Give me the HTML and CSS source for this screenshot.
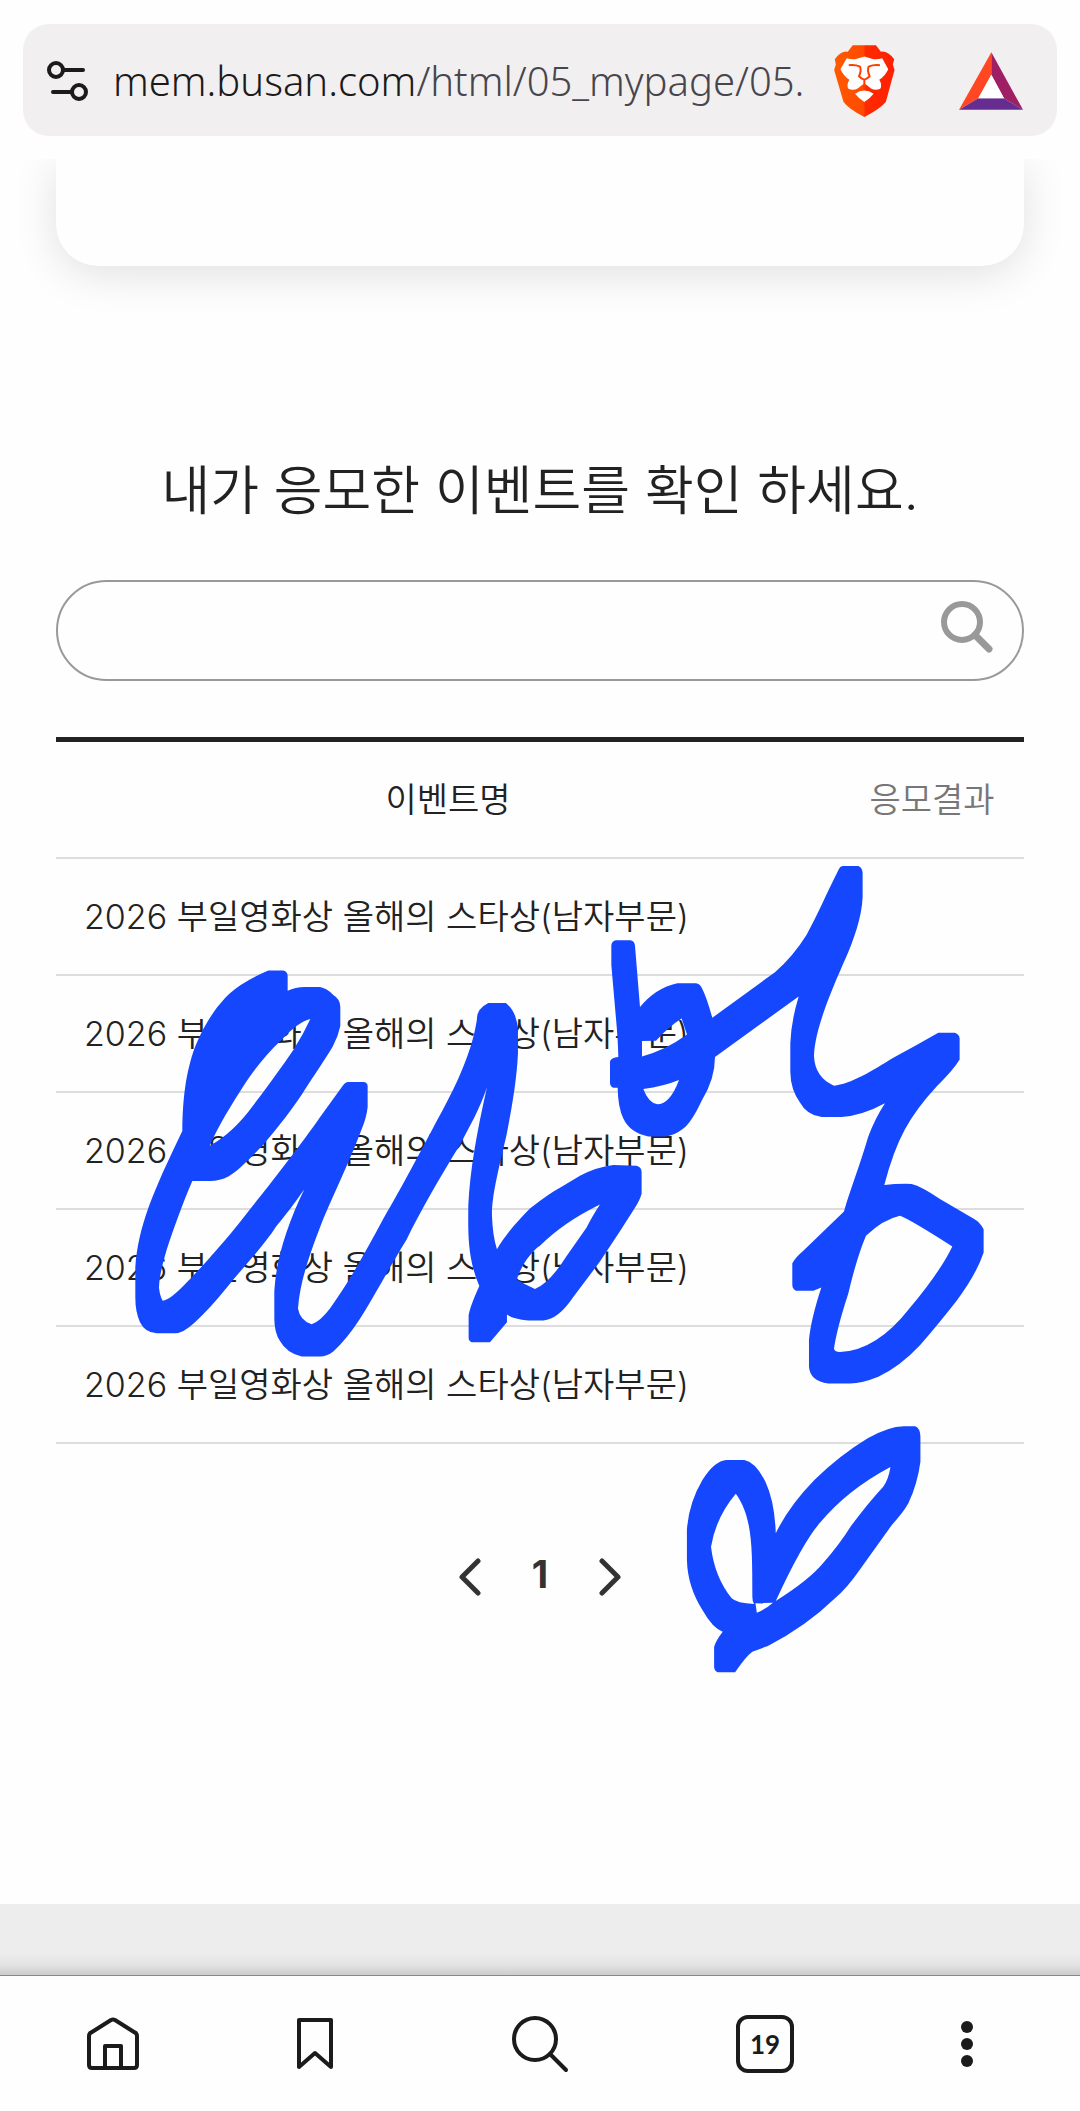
FILE: index.html
```html
<!DOCTYPE html>
<html lang="ko">
<head>
<meta charset="utf-8">
<meta name="viewport" content="width=device-width, initial-scale=1">
<title>이벤트 응모 내역</title>
<link rel="stylesheet" href="styles.css">
</head>
<body>
<header class="topbar">
  <div class="address">
    <button class="icon-button" type="button" aria-label="사이트 설정">
      <svg width="44" height="44" viewBox="0 0 44 44" fill="none" stroke="#1b1b1b" stroke-width="4">
        <circle cx="11" cy="11" r="7"/><path d="M18 11h20" stroke-linecap="round"/>
        <circle cx="34" cy="33" r="7"/><path d="M27 33H8" stroke-linecap="round"/>
      </svg>
    </button>
    <button class="url" type="button">mem.busan.com<span class="url-path">/html/05_mypage/05.</span></button>
    <button class="icon-button" type="button" aria-label="Brave Shields">
      <svg width="61" height="72" viewBox="102 75 183 217">
        <defs><linearGradient id="lion"><stop offset="0" stop-color="#ff5a00"/><stop offset=".48" stop-color="#ff4a00"/><stop offset=".52" stop-color="#ff2a00"/><stop offset="1" stop-color="#ff2000"/></linearGradient></defs>
        <path fill="url(#lion)" d="M158 76H228L243 95Q264 92 283 118L279 134L284 150L258 246Q243 266 193 292Q143 266 130 246L102 150L107 134L104 118Q122 92 143 95Z"/>
        <path fill="#fff" d="M140 115Q155 119 168 117L193 110L218 117Q232 119 247 115L265 148Q256 168 238 180Q248 195 241 207Q226 214 212 205L197 193H189L174 205Q160 214 145 207Q138 195 148 180Q130 168 121 148Z"/>
        <path fill="#fff" d="M165 222Q193 202 221 222Q210 236 193 247Q176 236 165 222Z"/>
        <path fill="none" stroke="#ff3d00" stroke-width="6" stroke-linejoin="round" d="M146 136Q166 134 180 140Q185 151 177 169Q184 176 193 180Q202 176 209 169Q201 151 206 140Q220 134 240 136M193 178V204"/>
      </svg>
    </button>
    <button class="icon-button icon-button-wide" type="button" aria-label="Brave Rewards">
      <svg width="64" height="58" viewBox="478 97 192 173">
        <path fill="#ff4724" d="M575 97L478 270L536 235L575 165Z"/>
        <path fill="#9e1f63" d="M575 97L670 270L613 235L575 165Z"/>
        <path fill="#662d91" d="M478 270H670L613 235H536Z"/>
        <path fill="#fff" d="M575 165L613 235H536Z"/>
      </svg>
    </button>
  </div>
</header>

<main class="page">
  <div class="card"></div>
  <h1 class="title">내가 응모한 이벤트를 확인 하세요.</h1>
  <form class="search">
    <input class="search-input" type="search" aria-label="이벤트 검색">
    <button class="icon-button" type="submit" aria-label="검색">
      <svg width="54" height="54" viewBox="0 0 54 54" fill="none" stroke="#999" stroke-width="6">
        <circle cx="22" cy="22" r="18"/><path d="M35 35L49 49" stroke-width="7" stroke-linecap="round"/>
      </svg>
    </button>
  </form>

  <table class="events">
    <thead><tr><th>이벤트명</th><th class="result">응모결과</th></tr></thead>
    <tbody>
      <tr><td>2026 부일영화상 올해의 스타상(남자부문)</td><td></td></tr>
      <tr><td>2026 부일영화상 올해의 스타상(남자부문)</td><td></td></tr>
      <tr><td>2026 부일영화상 올해의 스타상(남자부문)</td><td></td></tr>
      <tr><td>2026 부일영화상 올해의 스타상(남자부문)</td><td></td></tr>
      <tr><td>2026 부일영화상 올해의 스타상(남자부문)</td><td></td></tr>
    </tbody>
  </table>

  <nav class="pagination" aria-label="페이지">
    <button class="page-button" type="button" aria-label="이전"><svg width="24" height="38" viewBox="0 0 24 38"><path d="M20 3L4 19L20 35"/></svg></button>
    <a class="page-button page-number" href="#" aria-current="page">1</a>
    <button class="page-button" type="button" aria-label="다음"><svg width="24" height="38" viewBox="0 0 24 38"><path d="M4 3L20 19L4 35"/></svg></button>
  </nav>

  <svg class="ink" viewBox="0 159 1080 1745" aria-hidden="true">
    <g transform="translate(120 840) scale(.3333 .3444)">
      <path d="M445 379L490 379Q503 382 503 395L503 438Q525 427 555 427L600 427Q620 430 640 450Q661 462 661 485L661 540Q655 570 638 600C600 660 570 700 545 740C500 805 460 850 430 885C390 925 350 965 325 977Q300 990 270 990L217 990C190 1050 160 1130 140 1190Q118 1260 117 1300Q120 1325 128 1338Q150 1337 205 1280C250 1235 330 1150 400 1060C450 1000 550 875 600 805L665 718Q675 703 685 703L732 703Q743 705 743 715L743 775Q740 805 725 840C690 930 650 1010 610 1100C570 1200 540 1280 534 1360Q540 1395 575 1406Q600 1398 630 1360C690 1280 740 1190 790 1100C860 985 920 870 965 790C1010 710 1058 610 1071 520Q1070 490 1105 473L1158 473Q1195 505 1194 560L1194 620C1190 700 1175 780 1160 855C1140 940 1115 1030 1116 1090Q1118 1150 1131 1188C1160 1140 1200 1100 1230 1070Q1290 1025 1320 1010L1380 975Q1430 950 1480 944L1550 946Q1565 950 1565 965L1565 1027Q1560 1045 1545 1068L1500 1136L1440 1224L1360 1327Q1315 1392 1270 1395L1225 1395Q1180 1392 1161 1378L1161 1400Q1135 1430 1110 1458L1055 1458Q1046 1455 1046 1445L1046 1380Q1050 1355 1078 1295C1040 1210 1045 1130 1045 1060C1050 960 1070 850 1101 718C1080 780 1050 830 1020 885C960 980 900 1080 860 1160C800 1255 760 1330 720 1390Q680 1450 640 1485Q620 1500 600 1500L545 1500Q500 1490 480 1455Q463 1430 463 1390L463 1310C468 1220 500 1120 553 1014C520 1060 500 1085 470 1120C430 1180 370 1240 320 1300Q270 1360 225 1400Q190 1432 165 1432L110 1432Q75 1430 60 1400Q46 1370 46 1330L46 1240C55 1120 100 1020 187 845C188 740 200 680 215 630C240 550 290 480 330 445Q370 410 445 379Z M269 888C295 830 340 760 370 715C400 670 440 620 485 580Q535 528 571 520Q550 565 520 610C485 660 440 720 400 770Q340 850 269 888Z M1190 1277C1205 1230 1240 1190 1260 1178Q1330 1110 1440 1058Q1415 1095 1400 1125L1340 1208Q1290 1285 1245 1304Q1215 1290 1190 1277Z"/>
    </g>
    <g transform="translate(540 840) scale(.3333 .3571)">
      <path d="M228 281L272 281Q284 284 285 296L300 468Q345 415 412 401L468 401Q480 403 486 415Q500 440 517 498L705 370Q760 325 800 265C830 215 860 150 895 85Q900 73 910 73L955 73Q967 78 968 92L968 160C965 220 940 280 920 325C870 430 825 530 822 605Q825 665 882 688C930 685 1000 645 1060 610Q1130 575 1195 540L1245 540Q1258 545 1259 555L1259 615Q1240 645 1190 690Q1130 750 1095 810Q1060 870 1033 966Q1070 962 1115 963Q1145 970 1200 1005L1300 1060Q1320 1070 1331 1090L1331 1155Q1310 1215 1250 1290Q1200 1350 1140 1415Q1080 1475 1015 1503Q965 1522 930 1522L865 1522Q810 1515 807 1475L807 1400Q812 1345 844 1253L820 1262L768 1262Q757 1258 757 1245L757 1185Q765 1170 790 1150L912 1040C930 980 960 910 985 830Q1005 780 1035 737Q970 770 905 776L845 776Q800 770 780 735Q752 700 751 650L751 570Q753 510 776 438L525 608Q525 670 485 730Q455 790 430 808Q400 830 375 830L325 830Q270 820 250 780Q234 750 233 694L220 694Q210 690 210 680L210 620Q213 610 235 608Q234 560 228 500L214 350L214 295Q216 283 228 281Z M306 563L348 562Q390 520 425 500L441 545Q375 590 306 606Z M310 697Q370 690 417 672Q390 740 352 740Q325 735 310 697Z M978 1108Q1030 1062 1080 1052Q1110 1062 1237 1138Q1200 1210 1110 1310Q1010 1430 900 1434Q885 1434 882 1425Q890 1370 925 1270Q950 1170 978 1108Z"/>
    </g>
    <g transform="translate(420 1400) scale(.3444 .3333)">
      <path d="M890 180L942 180Q975 187 1003 245Q1030 305 1033 400Q1070 320 1145 240Q1220 165 1300 115Q1360 80 1405 79L1438 79Q1452 84 1453 110L1453 185Q1445 250 1418 310Q1405 335 1370 375L1280 505Q1240 565 1205 595Q1120 680 1010 738L965 755Q945 770 915 817L865 817Q854 812 854 800L854 740Q860 720 879 695Q850 685 820 630Q777 560 775 480L775 390Q780 310 820 240Q855 182 890 180Z M917 281Q860 350 845 440Q855 530 905 595Q920 610 970 612Q965 605 965 590C965 440 965 350 917 281Z M974 610L1025 608Q1000 630 978 638Z M1366 201Q1240 270 1160 370Q1110 430 1033 603Q1130 540 1170 490Q1220 430 1250 380Q1300 310 1345 260Q1360 240 1366 201Z"/>
    </g>
  </svg>
</main>

<div class="page-footer"></div>

<nav class="toolbar" aria-label="브라우저">
  <button class="tool" type="button" aria-label="홈"><svg width="52" height="54" viewBox="0 0 52 54"><path d="M2 19Q2 16 5 15L24 3Q26 2 28 3L47 15Q50 16 50 19V48Q50 51 47 51H5Q2 51 2 48ZM18 51V29H34V51"/></svg></button>
  <button class="tool" type="button" aria-label="북마크"><svg width="36" height="54" viewBox="0 0 36 54"><path d="M2 3H34V50L18 36L2 50Z"/></svg></button>
  <button class="tool" type="button" aria-label="검색"><svg width="58" height="58" viewBox="0 0 58 58"><circle cx="24" cy="24" r="21"/><path d="M39 39L55 55"/></svg></button>
  <button class="tool" type="button" aria-label="탭 19개"><span class="tabs">19</span></button>
  <button class="tool" type="button" aria-label="메뉴"><svg width="12" height="48" viewBox="0 0 12 48"><g fill="#1b1b1b" stroke="none"><circle cx="6" cy="7" r="6"/><circle cx="6" cy="24" r="6"/><circle cx="6" cy="41" r="6"/></g></svg></button>
</nav>
</body>
</html>
```
FILE: styles.css
```css
* { box-sizing: border-box; }

body {
  margin: 0;
  min-height: 100vh;
  display: flex;
  flex-direction: column;
  background: #fefefe;
  color: #222;
  font-family: Inter, "Noto Sans CJK KR", sans-serif;
}

svg { display: block; }

button, input {
  margin: 0;
  padding: 0;
  border: 0;
  background: none;
  color: inherit;
  font: inherit;
}

.topbar { padding: 24px 23px 23px; }

.address {
  display: flex;
  align-items: center;
  height: 112px;
  padding: 2px 34px 0 22px;
  border-radius: 26px;
  background: #f2eff0;
}

.icon-button { flex: none; }
.icon-button-wide { margin-left: 64px; }

.url {
  flex: 1;
  min-width: 0;
  margin: 0 22px 0 24px;
  overflow: hidden;
  white-space: nowrap;
  text-align: left;
  font-family: "Noto Sans", sans-serif;
  font-size: 40px;
  line-height: 56px;
  font-weight: 300;
  color: #1b1b1b;
}
.url-path { color: #46464c; }

.page {
  position: relative;
  padding: 0 56px 297px;
  overflow: hidden;
}

.card {
  height: 107px;
  border-radius: 0 0 42px 42px;
  box-shadow: 0 8px 44px rgba(0, 0, 0, .12);
}

.title {
  margin: 195px 0 59px;
  text-align: center;
  font-size: 53px;
  line-height: 60px;
  font-weight: 350;
}

.search {
  display: flex;
  align-items: center;
  height: 101px;
  padding: 0 28px 8px 40px;
  border: 2px solid #999;
  border-radius: 51px;
}
.search-input {
  flex: 1;
  min-width: 0;
  height: 80px;
  font-size: 34px;
  outline: 0;
}

.events {
  width: 100%;
  margin-top: 56px;
  border-collapse: separate;
  border-spacing: 0;
  border-top: 5px solid #222;
  font-size: 34px;
  line-height: 48px;
}
.events th, .events td {
  height: 117px;
  padding: 0 28px;
  border-bottom: 2px solid #ddd;
  font-weight: 350;
  text-align: left;
}
.events th { text-align: center; }
.events .result {
  width: 184px;
  color: #777;
  white-space: nowrap;
}

.pagination {
  display: flex;
  justify-content: center;
  gap: 30px;
  margin-top: 103px;
}
.page-button {
  display: grid;
  place-items: center;
  width: 40px;
  height: 60px;
  color: #333;
  font-size: 38px;
  font-weight: 700;
  text-decoration: none;
}
.page-number { padding-bottom: 6px; }
.page-button path {
  fill: none;
  stroke: #333;
  stroke-width: 5;
  stroke-linecap: round;
  stroke-linejoin: round;
}

/* Pen drawing over the list */
.ink {
  position: absolute;
  top: 0;
  left: 0;
  width: 100%;
  fill: #1547ff;
  fill-rule: evenodd;
  pointer-events: none;
}

.page-footer {
  flex: 1;
  min-height: 72px;
  border-bottom: 1px solid #888;
  background: linear-gradient(to top, #ccc, #e3e3e3 10px, #ededed 22px);
}

.toolbar {
  display: grid;
  grid-template-columns: 204fr 200fr 250fr 200fr 204fr;
  height: 135px;
  padding: 0 11px;
}
.tool {
  display: grid;
  place-items: center;
}
.tool svg {
  fill: none;
  stroke: #1b1b1b;
  stroke-width: 4;
  stroke-linecap: round;
  stroke-linejoin: round;
}
.tabs {
  display: grid;
  place-items: center;
  width: 58px;
  height: 58px;
  border: 4px solid #1b1b1b;
  border-radius: 12px;
  color: #1b1b1b;
  font-family: Lato, sans-serif;
  font-size: 26px;
  font-weight: 700;
}
```
